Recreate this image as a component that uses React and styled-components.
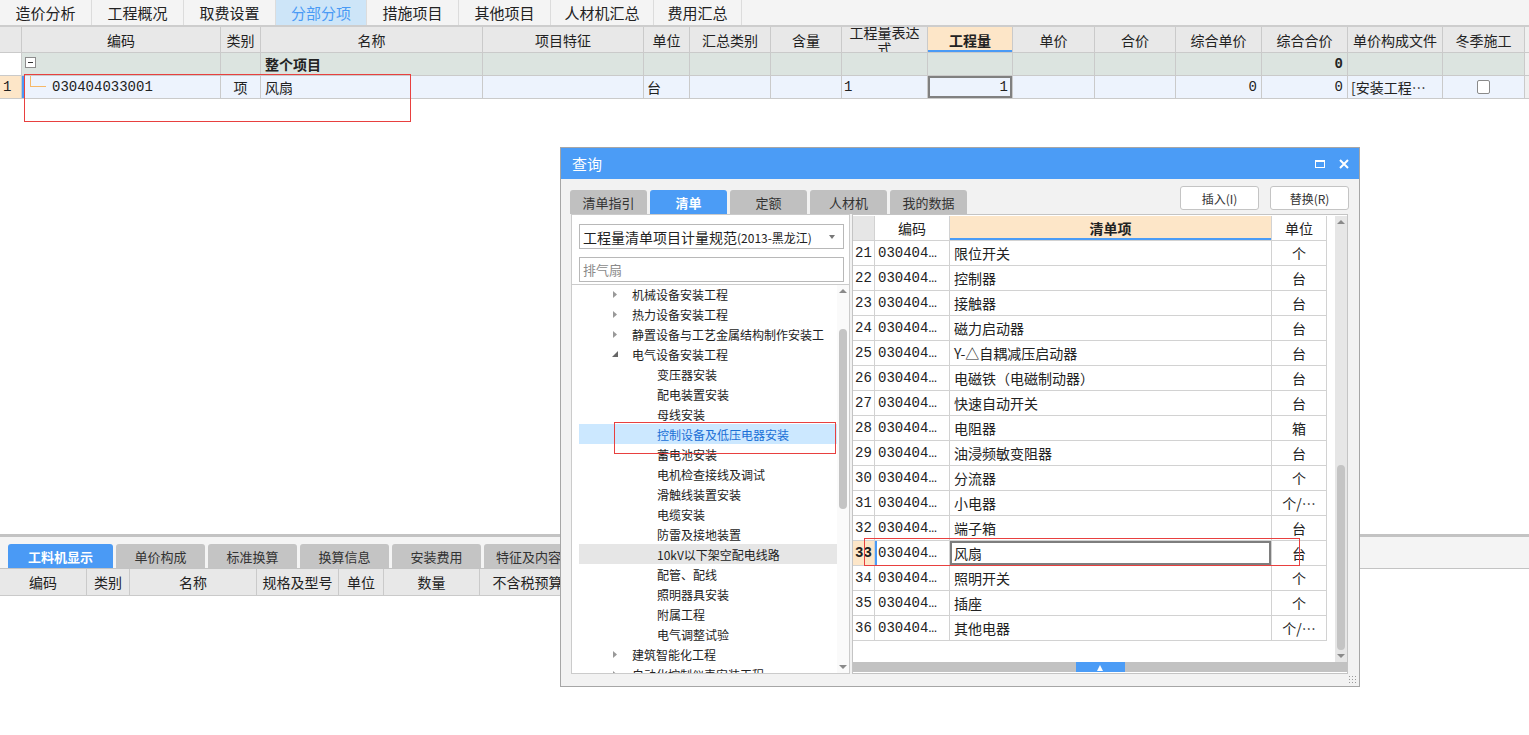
import React from "react";
import styled, { createGlobalStyle } from "styled-components";

const GlobalStyle = createGlobalStyle`
  html, body { margin: 0; padding: 0; }
  body {
    font-family: "Noto Sans CJK SC", "Microsoft YaHei", sans-serif;
    color: #222;
    background: #fff;
  }
  * { box-sizing: border-box; }
`;

const CJK = `"Noto Sans CJK SC", "Microsoft YaHei", sans-serif`;
const MONO = `"Liberation Mono", "Noto Sans CJK SC", monospace`;

/* ---------- page ---------- */

const Page = styled.div`
  position: relative;
  width: 1529px;
  height: 735px;
  display: flex;
  flex-direction: column;
  overflow: hidden;
`;

const TopTabs = styled.div`
  display: flex;
  height: 27px;
  background: #f4f4f4;
  border-bottom: 2px solid #cdcdcd;
`;

const TopTab = styled.div`
  width: ${(p) => p.$w}px;
  display: flex;
  align-items: center;
  justify-content: center;
  font-size: 15px;
  line-height: 25px;
  border-right: 1px solid #dcdcdc;
  color: ${(p) => (p.$active ? "#4a9af5" : "#222")};
  background: ${(p) => (p.$active ? "#cde5f8" : "transparent")};
`;

/* ---------- main grid ---------- */

const mainCols = [22, 199, 40, 222, 161, 46, 81, 71, 86, 85, 82, 81, 86, 86, 95, 82];

const GridRow = styled.div`
  display: grid;
  grid-template-columns: ${mainCols.map((w) => w + "px").join(" ")} 1fr;
  height: ${(p) => p.$h}px;
  background: ${(p) => p.$bg};
`;

const Cell = styled.div`
  position: relative;
  display: flex;
  align-items: center;
  justify-content: ${(p) =>
    p.$align === "right" ? "flex-end" : p.$align === "left" ? "flex-start" : "center"};
  padding: 0 ${(p) => (p.$pad != null ? p.$pad : 4)}px;
  border-right: 1px solid #cacaca;
  border-bottom: 1px solid #cacaca;
  font-size: 14px;
  line-height: 16px;
  font-weight: ${(p) => (p.$bold ? 700 : 400)};
  font-family: ${(p) => (p.$mono ? MONO : CJK)};
  background: ${(p) => p.$bg || "transparent"};
  overflow: hidden;
  white-space: ${(p) => (p.$wrap ? "normal" : "nowrap")};
  text-align: center;
  box-shadow: ${(p) => p.$shadow || "none"};
`;

const Minus = styled.span`
  position: absolute;
  left: 3px;
  top: 4px;
  width: 11px;
  height: 11px;
  border: 1px solid #8c8c8c;
  background: #fff;
  &::after {
    content: "";
    position: absolute;
    left: 2px;
    top: 4px;
    width: 5px;
    height: 1px;
    background: #333;
  }
`;

const TreeLine = styled.span`
  position: absolute;
  left: 8px;
  top: -8px;
  width: 16px;
  height: 19px;
  border-left: 1px solid #f6b868;
  border-bottom: 1px solid #f6b868;
`;

const CheckBox = styled.span`
  width: 13px;
  height: 14px;
  border: 1px solid #8a8a8a;
  border-radius: 2px;
  background: #fff;
`;

const Filler = styled.div`
  flex: 1;
`;

/* ---------- bottom panel ---------- */

const BottomPanel = styled.div`
  height: 201px;
  border-top: 3px solid #c3c3c3;
  display: flex;
  flex-direction: column;
`;

const BottomStrip = styled.div`
  height: 32px;
  background: #f4f4f4;
  border-bottom: 1px solid #c3c3c3;
  display: flex;
  align-items: flex-end;
  gap: 3px;
  padding-left: 8px;
`;

const BottomTab = styled.div`
  width: ${(p) => p.$w}px;
  height: 24px;
  border-radius: 3px 3px 0 0;
  display: flex;
  align-items: center;
  justify-content: center;
  font-size: 13px;
  background: ${(p) => (p.$active ? "#4a9af5" : "#c4c4c4")};
  color: ${(p) => (p.$active ? "#fff" : "#333")};
  font-weight: ${(p) => (p.$active ? 700 : 400)};
`;

const bottomCols = [87, 43, 127, 82, 45, 96, 110, 110, 110, 110];

const BottomHeader = styled.div`
  display: grid;
  grid-template-columns: ${bottomCols.map((w) => w + "px").join(" ")};
  height: 27px;
`;

const BHCell = styled.div`
  background: #e8e8e8;
  border-right: 1px solid #cacaca;
  border-bottom: 1px solid #cacaca;
  display: flex;
  align-items: center;
  justify-content: center;
  font-size: 14px;
  white-space: nowrap;
  overflow: hidden;
`;

const RedBox = styled.div`
  position: absolute;
  left: ${(p) => p.$x}px;
  top: ${(p) => p.$y}px;
  width: ${(p) => p.$w}px;
  height: ${(p) => p.$h}px;
  border: 1px solid #e8403f;
  pointer-events: none;
  z-index: 5;
`;

/* ---------- dialog ---------- */

const Dialog = styled.div`
  position: absolute;
  left: 560px;
  top: 147px;
  width: 800px;
  height: 540px;
  border: 1px solid #a6a6a6;
  background: #f2f2f2;
  display: flex;
  flex-direction: column;
  z-index: 3;
`;

const TitleBar = styled.div`
  height: 31px;
  background: #4b9cf6;
  color: #fff;
  display: flex;
  align-items: center;
  justify-content: space-between;
  padding: 0 10px 0 11px;
  font-size: 15px;
`;

const TitleIcons = styled.div`
  display: flex;
  align-items: center;
  gap: 14px;
`;

const MaxIcon = styled.span`
  width: 10px;
  height: 8px;
  border: 1px solid #fff;
  border-top-width: 2px;
`;

const Toolbar = styled.div`
  height: 35px;
  display: flex;
  justify-content: space-between;
  padding: 0 10px 0 9px;
`;

const DTabs = styled.div`
  display: flex;
  gap: 3px;
  align-self: flex-end;
`;

const DTab = styled.div`
  width: 77px;
  height: 24px;
  border-radius: 3px 3px 0 0;
  display: flex;
  align-items: center;
  justify-content: center;
  font-size: 13px;
  background: ${(p) => (p.$active ? "#4b9cf6" : "#c0c0c0")};
  color: ${(p) => (p.$active ? "#fff" : "#333")};
  font-weight: ${(p) => (p.$active ? 700 : 400)};
`;

const Buttons = styled.div`
  display: flex;
  gap: 11px;
  padding-top: 7px;
`;

const Button = styled.div`
  width: 79px;
  height: 24px;
  border: 1px solid #c4c4c4;
  border-radius: 3px;
  background: #fff;
  display: flex;
  align-items: center;
  justify-content: center;
  font-size: 12px;
  color: #333;
`;

const Content = styled.div`
  height: 460px;
  display: flex;
  padding: 0 11px 0 10px;
  gap: 2px;
`;

const LeftPanel = styled.div`
  width: 281px;
  background: #fff;
  border: 1px solid #cbcbcb;
  display: flex;
  flex-direction: column;
`;

const Select = styled.div`
  margin: 9px 5px 0 7px;
  height: 25px;
  border: 1px solid #b8b8b8;
  display: flex;
  align-items: center;
  justify-content: space-between;
  padding: 0 8px 0 3px;
  font-size: 14px;
  white-space: nowrap;
  small {
    font-size: 12px;
  }
`;

const Caret = styled.span`
  width: 0;
  height: 0;
  border-left: 3px solid transparent;
  border-right: 3px solid transparent;
  border-top: 4px solid #777;
`;

const Search = styled.div`
  margin: 8px 5px 0 7px;
  height: 25px;
  border: 1px solid #b8b8b8;
  display: flex;
  align-items: center;
  padding-left: 3px;
  font-size: 13px;
  color: #8a8a8a;
`;

const TreeBox = styled.div`
  margin-top: 2px;
  flex: 1;
  border-top: 1px solid #cbcbcb;
  display: flex;
  overflow: hidden;
`;

const TreeList = styled.div`
  flex: 1;
  padding-left: 7px;
  overflow: hidden;
  margin-top: -1px;
`;

const TreeItem = styled.div`
  height: 20px;
  display: flex;
  align-items: center;
  padding-left: ${(p) => (p.$lvl === 1 ? 32 : 78)}px;
  font-size: 12px;
  white-space: nowrap;
  color: ${(p) => (p.$sel ? "#1a6fd6" : "#222")};
  background: ${(p) => (p.$sel ? "#cce8ff" : p.$hover ? "#e6e6e6" : "transparent")};
`;

const Arrow = styled.span`
  width: 21px;
  display: flex;
  align-items: center;
`;

const VScroll = styled.div`
  width: 12px;
  background: ${(p) => p.$track};
  display: flex;
  flex-direction: column;
  align-items: center;
  justify-content: space-between;
  padding: 4px 0;
  position: relative;
`;

const Thumb = styled.div`
  position: absolute;
  left: 2px;
  width: 8px;
  top: ${(p) => p.$top}px;
  height: ${(p) => p.$h}px;
  background: #c4c4c4;
  border-radius: 4px;
`;

const Tri = styled.span`
  width: 0;
  height: 0;
  border-left: 4px solid transparent;
  border-right: 4px solid transparent;
  ${(p) => (p.$up ? "border-bottom: 4px solid #8a8a8a;" : "border-top: 4px solid #8a8a8a;")}
`;

const RightPanel = styled.div`
  flex: 1;
  background: #fff;
  border: 1px solid #c4c4c4;
  display: flex;
  flex-direction: column;
`;

const RightMain = styled.div`
  flex: 1;
  display: flex;
  padding-top: 1px;
`;

const QTable = styled.div`
  flex: 1;
`;

const QRow = styled.div`
  display: grid;
  grid-template-columns: 22px 75px 322px 55px;
  height: 25px;
`;

const QCell = styled.div`
  display: flex;
  align-items: center;
  justify-content: ${(p) => (p.$center ? "center" : "flex-start")};
  padding-left: ${(p) => (p.$center ? 0 : p.$pl || 3)}px;
  border-right: 1px solid #d2d2d2;
  border-bottom: 1px solid #d2d2d2;
  font-size: 14px;
  font-family: ${(p) => (p.$mono ? MONO : CJK)};
  font-weight: ${(p) => (p.$bold ? 700 : 400)};
  white-space: nowrap;
  overflow: hidden;
  background: ${(p) => p.$bg || "transparent"};
  box-shadow: ${(p) => p.$shadow || "none"};
`;

const HBar = styled.div`
  height: 10px;
  margin-bottom: 1px;
  background: #c2c2c2;
  display: flex;
  justify-content: center;
`;

const HBarKnob = styled.div`
  width: 49px;
  background: #4b9cf6;
  display: flex;
  align-items: flex-end;
  justify-content: center;
  padding-bottom: 1px;
`;

const KnobTri = styled.span`
  width: 0;
  height: 0;
  border-left: 3px solid transparent;
  border-right: 3px solid transparent;
  border-bottom: 6px solid #fff;
`;

const Grip = styled.div`
  position: absolute;
  right: 3px;
  bottom: 3px;
  width: 8px;
  height: 8px;
  background-image: radial-gradient(circle, #9a9a9a 0.8px, transparent 1px);
  background-size: 3px 3px;
`;

/* ---------- data ---------- */

const topTabs = [
  ["造价分析", 92],
  ["工程概况", 92],
  ["取费设置", 92],
  ["分部分项", 91, true],
  ["措施项目", 92],
  ["其他项目", 92],
  ["人材机汇总", 103],
  ["费用汇总", 88],
];

const headers = [
  "",
  "编码",
  "类别",
  "名称",
  "项目特征",
  "单位",
  "汇总类别",
  "含量",
  "工程量表达式",
  "工程量",
  "单价",
  "合价",
  "综合单价",
  "综合合价",
  "单价构成文件",
  "冬季施工",
];

const tree = [
  { t: "机械设备安装工程", lvl: 1, arrow: "closed" },
  { t: "热力设备安装工程", lvl: 1, arrow: "closed" },
  { t: "静置设备与工艺金属结构制作安装工程", lvl: 1, arrow: "closed" },
  { t: "电气设备安装工程", lvl: 1, arrow: "open" },
  { t: "变压器安装", lvl: 2 },
  { t: "配电装置安装", lvl: 2 },
  { t: "母线安装", lvl: 2 },
  { t: "控制设备及低压电器安装", lvl: 2, sel: true },
  { t: "蓄电池安装", lvl: 2 },
  { t: "电机检查接线及调试", lvl: 2 },
  { t: "滑触线装置安装", lvl: 2 },
  { t: "电缆安装", lvl: 2 },
  { t: "防雷及接地装置", lvl: 2 },
  { t: "10kV以下架空配电线路", lvl: 2, hover: true },
  { t: "配管、配线", lvl: 2 },
  { t: "照明器具安装", lvl: 2 },
  { t: "附属工程", lvl: 2 },
  { t: "电气调整试验", lvl: 2 },
  { t: "建筑智能化工程", lvl: 1, arrow: "closed" },
  { t: "自动化控制仪表安装工程", lvl: 1, arrow: "closed" },
];

const items = [
  [21, "限位开关", "个"],
  [22, "控制器", "台"],
  [23, "接触器", "台"],
  [24, "磁力启动器", "台"],
  [25, "Y-△自耦减压启动器", "台"],
  [26, "电磁铁（电磁制动器）", "台"],
  [27, "快速自动开关", "台"],
  [28, "电阻器", "箱"],
  [29, "油浸频敏变阻器", "台"],
  [30, "分流器", "个"],
  [31, "小电器", "个/…"],
  [32, "端子箱", "台"],
  [33, "风扇", "台"],
  [34, "照明开关", "个"],
  [35, "插座", "个"],
  [36, "其他电器", "个/…"],
];

const TreeArrow = ({ type }) =>
  type === "open" ? (
    <svg width="8" height="8" viewBox="0 0 8 8">
      <path d="M7 1 L7 7 L1 7 Z" fill="#666" />
    </svg>
  ) : (
    <svg width="8" height="9" viewBox="0 0 8 9">
      <path d="M2 1 L6 4.5 L2 8 Z" fill="#999" />
    </svg>
  );

const QueryDialog = () => (
  <Dialog>
    <TitleBar>
      <span>查询</span>
      <TitleIcons>
        <MaxIcon />
        <svg width="10" height="10" viewBox="0 0 10 10">
          <path d="M1 1 L9 9 M9 1 L1 9" stroke="#fff" strokeWidth="2" />
        </svg>
      </TitleIcons>
    </TitleBar>
    <Toolbar>
      <DTabs>
        <DTab>清单指引</DTab>
        <DTab $active>清单</DTab>
        <DTab>定额</DTab>
        <DTab>人材机</DTab>
        <DTab>我的数据</DTab>
      </DTabs>
      <Buttons>
        <Button>插入(I)</Button>
        <Button>替换(R)</Button>
      </Buttons>
    </Toolbar>
    <Content>
      <LeftPanel>
        <Select>
          <span>
            工程量清单项目计量规范<small>(2013-黑龙江)</small>
          </span>
          <Caret />
        </Select>
        <Search>排气扇</Search>
        <TreeBox>
          <TreeList>
            {tree.map((n) => (
              <TreeItem key={n.t} $lvl={n.lvl} $sel={n.sel} $hover={n.hover}>
                {n.lvl === 1 && (
                  <Arrow>
                    <TreeArrow type={n.arrow} />
                  </Arrow>
                )}
                {n.t.length > 16 ? n.t.slice(0, 16) : n.t}
              </TreeItem>
            ))}
          </TreeList>
          <VScroll $track="#fafafa">
            <Tri $up />
            <Thumb $top={44} $h={180} />
            <Tri />
          </VScroll>
        </TreeBox>
      </LeftPanel>
      <RightPanel>
        <RightMain>
          <QTable>
            <QRow>
              <QCell $bg="#e6e6e6" />
              <QCell $center>编码</QCell>
              <QCell $center $bold $bg="#fde6c8" $shadow="inset 0 -2px 0 #4b9cf6">
                清单项
              </QCell>
              <QCell $center>单位</QCell>
            </QRow>
            {items.map(([n, name, unit]) => {
              const sel = n === 33;
              return (
                <QRow key={n}>
                  <QCell $mono $pl={2} $bold={sel} $bg={sel ? "#fde6c8" : undefined}>
                    {n}
                  </QCell>
                  <QCell $mono $shadow={sel ? "inset 2px 0 0 #4b9cf6" : undefined}>
                    030404…
                  </QCell>
                  <QCell $pl={4} $shadow={sel ? "inset 0 0 0 2px #7e7e7e" : undefined}>
                    {name}
                  </QCell>
                  <QCell $center>{unit}</QCell>
                </QRow>
              );
            })}
          </QTable>
          <div style={{ width: 8 }} />
          <VScroll $track="#e6e6e6">
            <Tri $up />
            <Thumb $top={249} $h={185} />
            <Tri />
          </VScroll>
        </RightMain>
        <HBar>
          <HBarKnob>
            <KnobTri />
          </HBarKnob>
        </HBar>
      </RightPanel>
    </Content>
    <Grip />
    <RedBox $x={53} $y={274} $w={222} $h={32} />
    <RedBox $x={303} $y={390} $w={436} $h={28} />
  </Dialog>
);

const App = () => (
  <>
    <GlobalStyle />
    <Page>
      <TopTabs>
        {topTabs.map(([t, w, a]) => (
          <TopTab key={t} $w={w} $active={a}>
            {t}
          </TopTab>
        ))}
      </TopTabs>

      <div>
        <GridRow $h={26} $bg="#e8e8e8">
          {headers.map((h, i) =>
            i === 9 ? (
              <Cell key={i} $bold $bg="#fde6c8" $shadow="inset 0 -2px 0 #4a9af5">
                {h}
              </Cell>
            ) : (
              <Cell key={i} $wrap={i === 8}>
                {h}
              </Cell>
            )
          )}
          <Cell $bg="#f0f0f0" />
        </GridRow>

        <GridRow $h={23} $bg="#dce4e0">
          <Cell $bg="#fff" />
          <Cell>
            <Minus />
          </Cell>
          <Cell />
          <Cell $align="left" $bold>
            整个项目
          </Cell>
          <Cell />
          <Cell />
          <Cell />
          <Cell />
          <Cell />
          <Cell />
          <Cell />
          <Cell />
          <Cell />
          <Cell $align="right" $bold $mono>
            0
          </Cell>
          <Cell />
          <Cell />
          <Cell $bg="#f0f0f0" />
        </GridRow>

        <GridRow $h={23} $bg="#edf3fd">
          <Cell $align="left" $mono $bg="#fde6c8" $pad={3}>
            1
          </Cell>
          <Cell $align="left" $mono $pad={30} $shadow="inset 2px 0 0 #4a9af5">
            <TreeLine />
            030404033001
          </Cell>
          <Cell>项</Cell>
          <Cell $align="left">风扇</Cell>
          <Cell />
          <Cell $align="left" $pad={3}>
            台
          </Cell>
          <Cell />
          <Cell />
          <Cell $align="left" $mono $pad={2}>
            1
          </Cell>
          <Cell $align="right" $mono $shadow="inset 0 0 0 2px #808080">
            1
          </Cell>
          <Cell />
          <Cell />
          <Cell $align="right" $mono>
            0
          </Cell>
          <Cell $align="right" $mono>
            0
          </Cell>
          <Cell $align="left" $pad={3}>
            [安装工程…
          </Cell>
          <Cell>
            <CheckBox />
          </Cell>
          <Cell $bg="#f0f0f0" />
        </GridRow>
      </div>

      <Filler />

      <BottomPanel>
        <BottomStrip>
          <BottomTab $w={105} $active>
            工料机显示
          </BottomTab>
          <BottomTab $w={89}>单价构成</BottomTab>
          <BottomTab $w={89}>标准换算</BottomTab>
          <BottomTab $w={89}>换算信息</BottomTab>
          <BottomTab $w={89}>安装费用</BottomTab>
          <BottomTab $w={89}>特征及内容</BottomTab>
        </BottomStrip>
        <BottomHeader>
          {["编码", "类别", "名称", "规格及型号", "单位", "数量", "不含税预算价", "不含税市场价", "含税预算价", "含税市场价"].map(
            (h) => (
              <BHCell key={h}>{h}</BHCell>
            )
          )}
        </BottomHeader>
      </BottomPanel>

      <RedBox $x={24} $y={74} $w={387} $h={48} />
      <QueryDialog />
    </Page>
  </>
);

export default App;
